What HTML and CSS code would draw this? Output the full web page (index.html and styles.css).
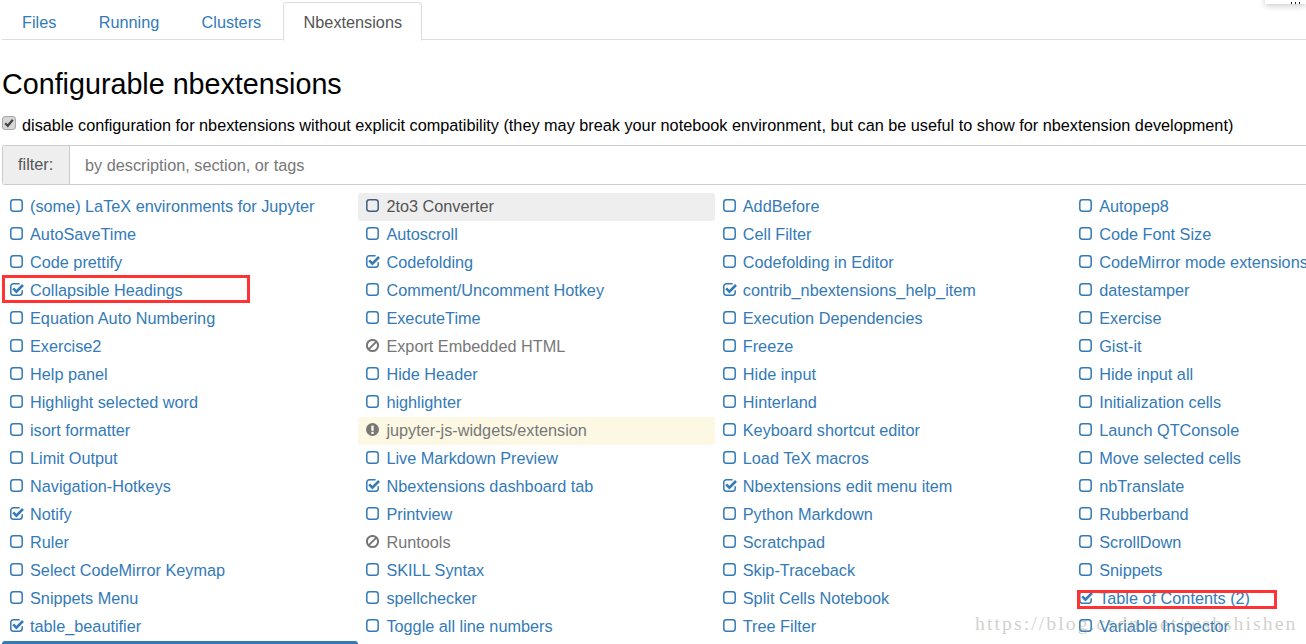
FILE: index.html
```html
<!DOCTYPE html>
<html lang="en">
<head>
<meta charset="utf-8">
<title>Configurable nbextensions</title>
<link rel="stylesheet" href="styles.css">
</head>
<body>
<svg class="defs" width="0" height="0" aria-hidden="true">
  <symbol id="off" viewBox="0 0 14 14"><rect x="0.8" y="0.8" width="11.4" height="11.4" rx="2.6" fill="none" stroke="currentColor" stroke-width="1.5"/></symbol>
  <symbol id="on" viewBox="0 0 14 14"><path d="M12.2 7.2v2.4a2.6 2.6 0 0 1-2.6 2.6H3.4a2.6 2.6 0 0 1-2.6-2.6V3.4a2.6 2.6 0 0 1 2.6-2.6h6.2" fill="none" stroke="currentColor" stroke-width="1.5"/><path d="M3.2 5.4l3.2 3.2 6.6-6.6" fill="none" stroke="currentColor" stroke-width="2.6"/></symbol>
  <symbol id="ban" viewBox="0 0 14 14"><circle cx="6.5" cy="6.5" r="5.6" fill="none" stroke="currentColor" stroke-width="2"/><path d="M2.6 10.4l7.8-7.8" stroke="currentColor" stroke-width="2"/></symbol>
  <symbol id="warn" viewBox="0 0 14 14"><circle cx="6.5" cy="6.5" r="6.5" fill="currentColor"/><rect x="5.3" y="2.6" width="2.4" height="5.2" fill="#fcf8e3"/><rect x="5.3" y="8.8" width="2.4" height="2.2" fill="#fcf8e3"/></symbol>
  <symbol id="box" viewBox="0 0 14 14"><rect x="0.5" y="0.5" width="13" height="13" rx="2.5" fill="#d6d6d6" stroke="#a8a8a8"/><path d="M3.2 7.2l2.6 2.6 5-6" fill="none" stroke="#444" stroke-width="2.2"/></symbol>
</svg>
<div class="corner-clip"></div>
<nav class="tabs">
  <a class="tab">Files</a>
  <a class="tab">Running</a>
  <a class="tab">Clusters</a>
  <a class="tab active">Nbextensions</a>
</nav>
<main class="page">
  <h1 class="title">Configurable nbextensions</h1>
  <label class="compat"><svg class="compat-box"><use href="#box"/></svg><span>disable configuration for nbextensions without explicit compatibility (they may break your notebook environment, but can be useful to show for nbextension development)</span></label>
  <div class="filter"><span class="filter-label">filter:</span><span class="filter-input">by description, section, or tags</span></div>
  <ul class="grid">
    <li class="item"><svg class="ic"><use href="#off"/></svg>(some) LaTeX environments for Jupyter</li>
    <li class="item hover"><svg class="ic"><use href="#off"/></svg>2to3 Converter</li>
    <li class="item"><svg class="ic"><use href="#off"/></svg>AddBefore</li>
    <li class="item"><svg class="ic"><use href="#off"/></svg>Autopep8</li>

    <li class="item"><svg class="ic"><use href="#off"/></svg>AutoSaveTime</li>
    <li class="item"><svg class="ic"><use href="#off"/></svg>Autoscroll</li>
    <li class="item"><svg class="ic"><use href="#off"/></svg>Cell Filter</li>
    <li class="item"><svg class="ic"><use href="#off"/></svg>Code Font Size</li>

    <li class="item"><svg class="ic"><use href="#off"/></svg>Code prettify</li>
    <li class="item"><svg class="ic"><use href="#on"/></svg>Codefolding</li>
    <li class="item"><svg class="ic"><use href="#off"/></svg>Codefolding in Editor</li>
    <li class="item"><svg class="ic"><use href="#off"/></svg>CodeMirror mode extensions</li>

    <li class="item"><svg class="ic"><use href="#on"/></svg>Collapsible Headings<i class="mark mark-a"></i></li>
    <li class="item"><svg class="ic"><use href="#off"/></svg>Comment/Uncomment Hotkey</li>
    <li class="item"><svg class="ic"><use href="#on"/></svg>contrib_nbextensions_help_item</li>
    <li class="item"><svg class="ic"><use href="#off"/></svg>datestamper</li>

    <li class="item"><svg class="ic"><use href="#off"/></svg>Equation Auto Numbering</li>
    <li class="item"><svg class="ic"><use href="#off"/></svg>ExecuteTime</li>
    <li class="item"><svg class="ic"><use href="#off"/></svg>Execution Dependencies</li>
    <li class="item"><svg class="ic"><use href="#off"/></svg>Exercise</li>

    <li class="item"><svg class="ic"><use href="#off"/></svg>Exercise2</li>
    <li class="item muted"><svg class="ic"><use href="#ban"/></svg>Export Embedded HTML</li>
    <li class="item"><svg class="ic"><use href="#off"/></svg>Freeze</li>
    <li class="item"><svg class="ic"><use href="#off"/></svg>Gist-it</li>

    <li class="item"><svg class="ic"><use href="#off"/></svg>Help panel</li>
    <li class="item"><svg class="ic"><use href="#off"/></svg>Hide Header</li>
    <li class="item"><svg class="ic"><use href="#off"/></svg>Hide input</li>
    <li class="item"><svg class="ic"><use href="#off"/></svg>Hide input all</li>

    <li class="item"><svg class="ic"><use href="#off"/></svg>Highlight selected word</li>
    <li class="item"><svg class="ic"><use href="#off"/></svg>highlighter</li>
    <li class="item"><svg class="ic"><use href="#off"/></svg>Hinterland</li>
    <li class="item"><svg class="ic"><use href="#off"/></svg>Initialization cells</li>

    <li class="item"><svg class="ic"><use href="#off"/></svg>isort formatter</li>
    <li class="item muted warning"><svg class="ic"><use href="#warn"/></svg>jupyter-js-widgets/extension</li>
    <li class="item"><svg class="ic"><use href="#off"/></svg>Keyboard shortcut editor</li>
    <li class="item"><svg class="ic"><use href="#off"/></svg>Launch QTConsole</li>

    <li class="item"><svg class="ic"><use href="#off"/></svg>Limit Output</li>
    <li class="item"><svg class="ic"><use href="#off"/></svg>Live Markdown Preview</li>
    <li class="item"><svg class="ic"><use href="#off"/></svg>Load TeX macros</li>
    <li class="item"><svg class="ic"><use href="#off"/></svg>Move selected cells</li>

    <li class="item"><svg class="ic"><use href="#off"/></svg>Navigation-Hotkeys</li>
    <li class="item"><svg class="ic"><use href="#on"/></svg>Nbextensions dashboard tab</li>
    <li class="item"><svg class="ic"><use href="#on"/></svg>Nbextensions edit menu item</li>
    <li class="item"><svg class="ic"><use href="#off"/></svg>nbTranslate</li>

    <li class="item"><svg class="ic"><use href="#on"/></svg>Notify</li>
    <li class="item"><svg class="ic"><use href="#off"/></svg>Printview</li>
    <li class="item"><svg class="ic"><use href="#off"/></svg>Python Markdown</li>
    <li class="item"><svg class="ic"><use href="#off"/></svg>Rubberband</li>

    <li class="item"><svg class="ic"><use href="#off"/></svg>Ruler</li>
    <li class="item muted"><svg class="ic"><use href="#ban"/></svg>Runtools</li>
    <li class="item"><svg class="ic"><use href="#off"/></svg>Scratchpad</li>
    <li class="item"><svg class="ic"><use href="#off"/></svg>ScrollDown</li>

    <li class="item"><svg class="ic"><use href="#off"/></svg>Select CodeMirror Keymap</li>
    <li class="item"><svg class="ic"><use href="#off"/></svg>SKILL Syntax</li>
    <li class="item"><svg class="ic"><use href="#off"/></svg>Skip-Traceback</li>
    <li class="item"><svg class="ic"><use href="#off"/></svg>Snippets</li>

    <li class="item"><svg class="ic"><use href="#off"/></svg>Snippets Menu</li>
    <li class="item"><svg class="ic"><use href="#off"/></svg>spellchecker</li>
    <li class="item"><svg class="ic"><use href="#off"/></svg>Split Cells Notebook</li>
    <li class="item"><svg class="ic"><use href="#on"/></svg>Table of Contents (2)<i class="mark mark-b"></i></li>

    <li class="item"><svg class="ic"><use href="#on"/></svg>table_beautifier</li>
    <li class="item"><svg class="ic"><use href="#off"/></svg>Toggle all line numbers</li>
    <li class="item"><svg class="ic"><use href="#off"/></svg>Tree Filter</li>
    <li class="item"><svg class="ic"><use href="#off"/></svg>Variable Inspector</li>

    <li class="item selected"></li>
  </ul>
</main>
<div class="watermark">https://blog.csdn.net/wshshishen</div>
</body>
</html>
```
FILE: styles.css
```css
* { box-sizing: border-box; }
html, body { margin: 0; height: 644px; width: 1306px; overflow: hidden; background: #fff; }
body { position: relative; font-family: "Liberation Sans", Arial, sans-serif; font-size: 16.25px; color: #000; }
.defs { position: absolute; }
.tabs { display: flex; height: 40px; margin: 0 0 0 1.8px; padding-top: 2px; border-bottom: 1px solid #ddd; }
.tab { height: 38px; padding: 0 19.2px; margin-right: 2px; border: 1px solid transparent; line-height: 38px; color: #337ab7; }
.tab.active { height: 39px; color: #555; background: #fff; border-color: #ddd #ddd #fff; border-radius: 4px 4px 0 0; }
.page { padding-left: 2px; }
.title { margin: 26px 0 0; font-size: 28.7px; font-weight: 400; line-height: 36px; height: 36px; }
.compat { display: flex; align-items: center; margin-top: 13px; height: 20px; line-height: 20px; white-space: nowrap; }
.compat-box { flex: none; width: 14px; height: 14px; margin: -4px 6px 0 0; }
.filter { display: flex; height: 40px; margin-top: 10px; border: 1px solid #ccc; border-right: 0; border-radius: 3px 0 0 3px; }
.filter-label { width: 67px; padding-left: 15px; line-height: 36px; color: #555; background: #eee; border-right: 1px solid #ccc; }
.filter-input { padding-left: 15px; line-height: 38px; color: #777; }
.grid { display: grid; grid-template-columns: repeat(4, 356.4px); grid-auto-rows: 28px; margin: 8px 0 0; padding: 0; list-style: none; }
.item { position: relative; display: flex; align-items: center; padding: 0 0 2px 8px; color: #337ab7; white-space: nowrap; border-radius: 3px; }
.ic { flex: none; width: 14px; height: 14px; margin-right: 6px; }
.hover { color: #555; background: #eee; }
.hover .ic { color: #3f5f7f; }
.muted { color: #777; }
.warning { background: #fcf8e3; }
.selected { background: #337ab7; }
.mark { position: absolute; border: 3px solid #f33; pointer-events: none; }
.mark-a { left: 0; top: -2px; width: 248px; height: 28px; }
.mark-b { left: 6px; top: 5px; width: 200px; height: 19px; }
.corner-clip { position: absolute; top: -13px; right: 0; width: 41px; height: 17px; background: #fff; box-shadow: 0 2px 6px rgba(0,0,0,.2); }
.corner-clip::after { content: ""; position: absolute; left: 26px; bottom: 0; width: 10px; height: 2px; background: repeating-linear-gradient(90deg, #222 0 1px, transparent 1px 4px); }
.watermark { position: absolute; left: 975px; top: 612px; font-family: "Liberation Serif", serif; font-size: 19.8px; letter-spacing: 2.04px; line-height: 22px; color: rgba(150,150,140,.45); white-space: nowrap; }
```
